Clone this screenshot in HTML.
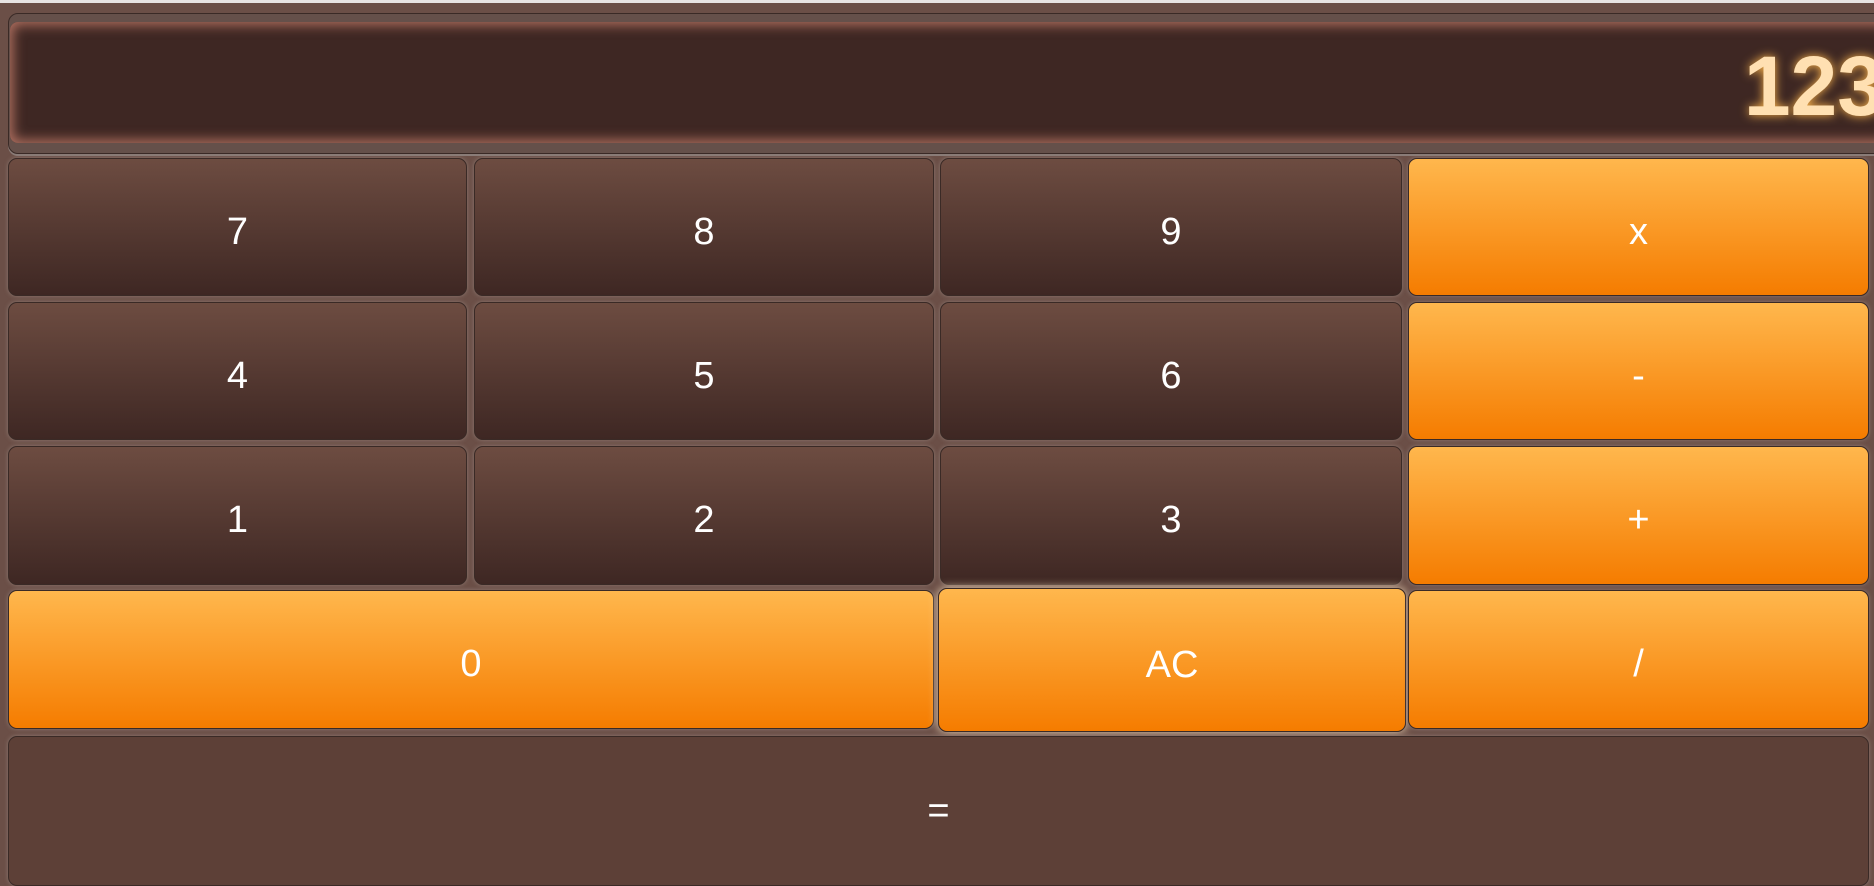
<!DOCTYPE html>
<html><head><style>
html,body{margin:0;padding:0;width:1874px;height:873px;overflow:hidden;background:#6b4f47;font-family:"Liberation Sans",sans-serif;}
.top{position:absolute;left:0;top:0;width:1874px;height:3px;background:#e8e4e3;}
.frame{position:absolute;left:8px;top:13px;width:1880px;height:139px;border:1px solid #3a2a26;border-radius:10px;background:#65504a;box-shadow:0 2px 0 #8a7c78;}
.disp{position:absolute;left:10px;top:22px;width:1880px;height:121px;background:#3e2723;border-radius:8px;box-shadow:inset 0 0 12px 3px #b07060;overflow:hidden;}
.disp span{position:absolute;right:6px;top:22px;font-size:84px;font-weight:bold;color:#ffe0b2;text-shadow:0 0 10px #ffb74d;line-height:1;}
.b{position:absolute;box-sizing:border-box;border:1px solid #3a2a26;border-radius:9px;color:#fff;font-family:"Liberation Sans","DejaVu Sans",sans-serif;font-size:38px;display:flex;align-items:center;justify-content:center;padding-top:10px;box-shadow:0 0 4px #8f7a72;}
.d{background:linear-gradient(#6d4c41,#3e2723);}
.o{background:linear-gradient(#ffb74d,#f57c00);}
.e{background:#5d4037;}
</style></head><body>
<div class="top"></div>
<div class="frame"></div>
<div class="disp"><span>123</span></div>
<div class="b d" style="left:8px;top:158px;width:459px;height:138px">7</div>
<div class="b d" style="left:474px;top:158px;width:460px;height:138px">8</div>
<div class="b d" style="left:940px;top:158px;width:462px;height:138px">9</div>
<div class="b o" style="left:1408px;top:158px;width:461px;height:138px">x</div>
<div class="b d" style="left:8px;top:302px;width:459px;height:138px">4</div>
<div class="b d" style="left:474px;top:302px;width:460px;height:138px">5</div>
<div class="b d" style="left:940px;top:302px;width:462px;height:138px">6</div>
<div class="b o" style="left:1408px;top:302px;width:461px;height:138px">-</div>
<div class="b d" style="left:8px;top:446px;width:459px;height:139px">1</div>
<div class="b d" style="left:474px;top:446px;width:460px;height:139px">2</div>
<div class="b d" style="left:940px;top:446px;width:462px;height:139px">3</div>
<div class="b o" style="left:1408px;top:446px;width:461px;height:139px">+</div>
<div class="b o" style="left:8px;top:590px;width:926px;height:139px">0</div>
<div class="b o" style="left:938px;top:588px;width:468px;height:144px;box-shadow:0 0 10px #f0d8b8">AC</div>
<div class="b o" style="left:1408px;top:590px;width:461px;height:139px">/</div>
<div class="b e" style="left:8px;top:736px;width:1861px;height:150px;padding-top:0">=</div>
</body></html>
